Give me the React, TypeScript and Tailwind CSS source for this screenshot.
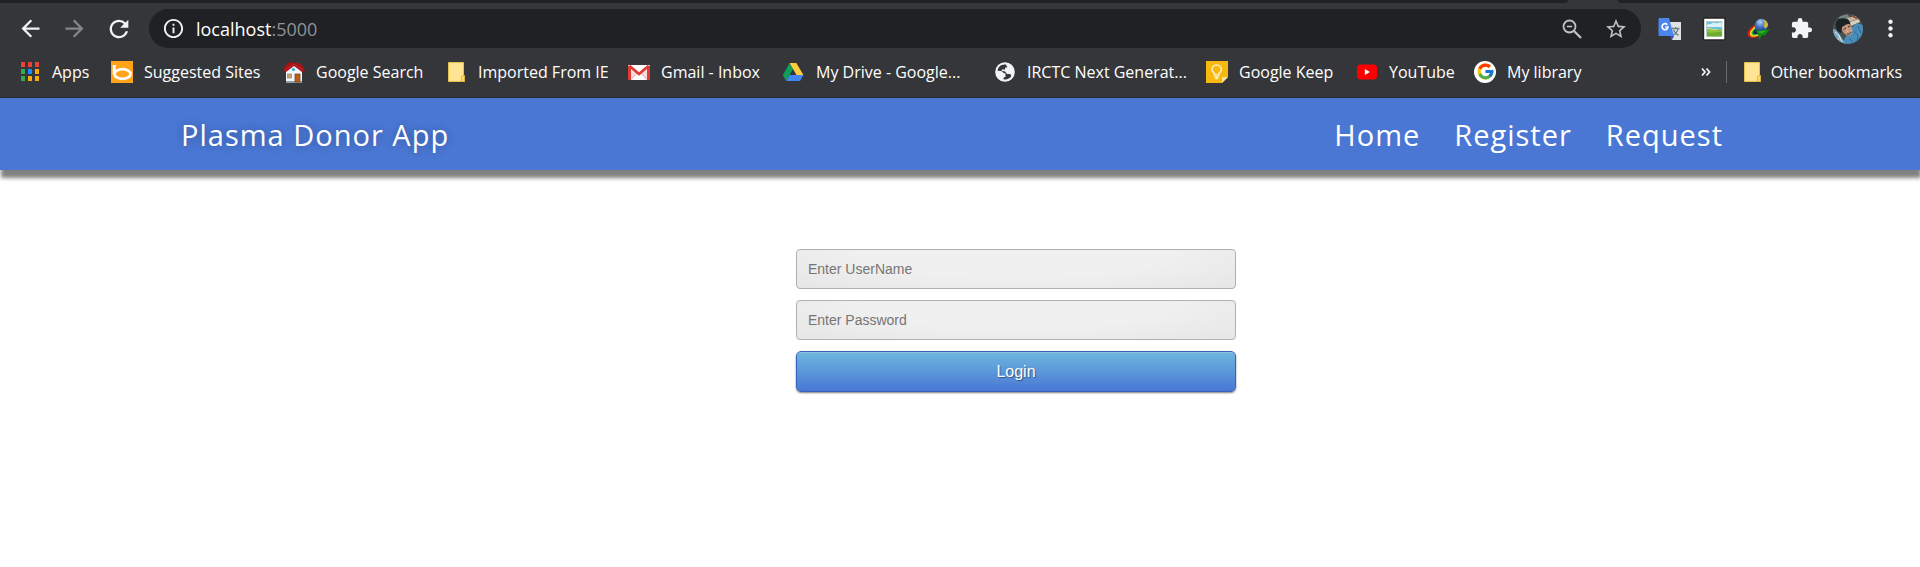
import React from "react";
import {
  MdArrowBack,
  MdArrowForward,
  MdExtension,
  MdInfoOutline,
  MdMoreVert,
  MdRefresh,
  MdStarBorder,
} from "react-icons/md";
import { FcGoogle } from "react-icons/fc";

const AppsIcon = () => {
  const colors = ["#ea4335", "#ea4335", "#ea4335", "#34a853", "#1a8cff", "#fbaa05", "#34a853", "#fbaa05", "#fbaa05"];
  return (
    <svg viewBox="0 0 22 22" className="size-[22px]">
      {colors.map((c, i) => (
        <rect key={i} x={2 + (i % 3) * 7} y={1 + Math.floor(i / 3) * 7} width="4" height="5" fill={c} />
      ))}
    </svg>
  );
};

const BingIcon = () => (
  <svg viewBox="0 0 22 22" className="size-[22px]">
    <rect width="22" height="22" fill="#ffa31a" />
    <path d="M3.2 4v9.5" stroke="#fff" strokeWidth="3" fill="none" />
    <ellipse cx="11.5" cy="13" rx="8" ry="4.8" stroke="#fff" strokeWidth="2.8" fill="none" />
  </svg>
);

const HouseIcon = () => (
  <svg viewBox="0 0 22 22" className="size-[22px]">
    <path d="M3 10 11 4l8 6v11H3z" fill="#f4f6fa" />
    <path d="M3 20h16v2H3z" fill="#8d9aa5" />
    <path d="M0 10 2 5l3-3h2V1h3v1h6l4 3 2 5-3 1-8-6-8 6z" fill="#a51319" />
    <path d="M2 9 11 3l9 6" stroke="#c42a2c" strokeWidth="1" fill="none" />
    <circle cx="10.5" cy="8.5" r="1.7" fill="#42b4e0" />
    <rect x="4.5" y="13" width="4" height="4" fill="#c9a56b" stroke="#7a8b99" strokeWidth=".7" />
    <rect x="12" y="13" width="5" height="8" fill="#b5611c" stroke="#7a3d10" strokeWidth=".7" />
  </svg>
);

const FolderIcon = () => (
  <svg viewBox="0 0 22 22" className="size-[22px]">
    <path d="M3.5 1.5h15v13h1v6h-16z" fill="#ffe593" stroke="#e8c24a" />
    <path d="M16.5 20.5v-5l1.5-1 1.5 1v5z" fill="#ffd86b" stroke="#dcae35" strokeWidth=".8" />
  </svg>
);

const GmailIcon = () => (
  <svg viewBox="0 0 22 22" className="size-[22px]">
    <rect y="4" width="22" height="15" fill="#f6dcda" />
    <path d="m3 19 6-7h4l6 7z" fill="#fff" />
    <path d="M3 18.5 9 12m10 6.5L13 12" stroke="#e9a7a3" />
    <path d="M3 4h16l-8 7z" fill="#fff" />
    <path d="M1.5 19V4.800" stroke="#dd3b35" strokeWidth="3" />
    <path d="M20.500 19V4.800" stroke="#dd3b35" strokeWidth="3" />
    <path d="m1.500 5 9.500 8 9.500-8" stroke="#dd3b35" strokeWidth="2.600" fill="none" />
  </svg>
);

const DriveIcon = () => (
  <svg viewBox="0 0 22 22" className="size-[22px]">
    <path d="M6.600 2 10 8 3.200 20-.2 14z" fill="#109d58" />
    <path d="M6.600 2h6.800l7 12h-6.900z" fill="#ffcd40" />
    <path d="M6.700 14h13.700L17 20H3.200z" fill="#4285f4" />
  </svg>
);

const GlobeIcon = () => (
  <svg viewBox="0 0 22 22" className="size-[22px]">
    <circle cx="11" cy="11" r="9.8" fill="#f1f3f4" />
    <path
      d="M12 3.6c-4.6-.8-8 2.2-8.4 6.2l3.6.2c1.600.1 1.700 2.300 3.300 2.300l1 .2v3.200l-2 1.100v1.400c3 .9 6.200-.5 7.900-3.100l-1.200-2.200h-3.200l-2.200-2.600-3-.4v-1.500h3.300V6.500h2.300z"
      fill="#35363a"
    />
  </svg>
);

const KeepIcon = () => (
  <svg viewBox="0 0 22 22" className="size-[22px]">
    <path d="M0 0h22v16l-6 6H0z" fill="#f7b90f" />
    <path d="M22 16h-6v6z" fill="#fde293" />
    <path
      d="M8.500 14v-1.500C6.800 11.500 6 10.200 6 8.600a4.700 4.700 0 0 1 9.400 0c0 1.600-.8 2.900-2.500 3.900V14z"
      fill="none"
      stroke="#fff1c4"
      strokeWidth="1.500"
    />
    <path d="M8.500 16h4.400M9.300 17.600h2.800" stroke="#fff1c4" strokeWidth="1.500" />
  </svg>
);

const YouTubeIcon = () => (
  <svg viewBox="0 0 22 22" className="size-[22px]">
    <rect x="1" y="3.500" width="20" height="15" rx="3.500" fill="#f00" />
    <path d="m8.800 8 5.200 3-5.200 3z" fill="#fff" />
  </svg>
);

const GoogleIcon = () => (
  <span className="flex size-[22px] items-center justify-center rounded-full bg-white">
    <FcGoogle size={19} />
  </span>
);

const ZoomOutIcon = () => (
  <svg viewBox="0 0 24 24" className="size-6" fill="none" stroke="currentColor">
    <circle cx="9.500" cy="9.500" r="6" strokeWidth="1.800" />
    <path d="M6.800 9.500h5.400" strokeWidth="1.600" />
    <path d="m14 14 7 7" strokeWidth="2.300" />
  </svg>
);

const TranslateIcon = () => (
  <svg viewBox="0 0 24 24" className="size-6">
    <path d="M10 5h13v18H14z" fill="#dfe1e4" />
    <path
      d="M14 11.500h7.500M17.700 10v1.500M20 11.800c-.7 3-2.600 5.200-5 6.500M15.500 13c1 2.400 2.800 4.200 5 5.300"
      stroke="#6b7d86"
      strokeWidth="1.300"
      fill="none"
    />
    <path d="M12 19h4l-2 4z" fill="#3a4fb5" />
    <path d="M1.500 1H11l5 18H1.500A1 1 0 0 1 .5 18V2a1 1 0 0 1 1-1z" fill="#4a86ee" />
    <path d="M9.300 7.700A3 3 0 1 0 10 10H7.300" stroke="#fff" strokeWidth="1.600" fill="none" />
  </svg>
);

const PictureIcon = () => (
  <svg viewBox="0 0 24 24" className="size-6">
    <rect x="1.500" y="1" width="21.500" height="22" rx="1" fill="#fff" stroke="#242424" strokeWidth="1.400" />
    <rect x="4.500" y="4.500" width="15.500" height="15" fill="#69c3dc" stroke="#b9bdb6" strokeWidth=".6" />
    <path d="M5 8c2-2 4 0 5-2 3-1 4 1 6 0 2-1 3 0 3.800-.5V10H5z" fill="#d9f1f6" />
    <path d="M5 12c5-1 10 2 14.800 0v7.300H5z" fill="#8fc43c" />
    <path d="M5 15c6 2 10-1 14.800 0v4.300H5z" fill="#6ead2f" />
    <path d="M5 11.500c4 0 7 1.500 10 1" stroke="#e8d68c" fill="none" />
  </svg>
);

const DownloadManagerIcon = () => (
  <svg viewBox="0 0 24 24" className="size-6">
    <defs>
      <radialGradient id="globe" cx=".4" cy=".25" r=".8">
        <stop offset="0" stopColor="#b9d3f2" />
        <stop offset=".45" stopColor="#3d74c4" />
        <stop offset="1" stopColor="#12306e" />
      </radialGradient>
    </defs>
    <ellipse cx="11" cy="13.500" rx="10.500" ry="6.200" transform="rotate(-32 11 13.500)" fill="#c81f1a" />
    <ellipse cx="11.700" cy="13.500" rx="9" ry="4.900" transform="rotate(-32 11.700 13.500)" fill="#f7d417" />
    <ellipse cx="12.300" cy="13.300" rx="7.600" ry="3.700" transform="rotate(-32 12.300 13.300)" fill="#2fae3d" />
    <ellipse cx="12.800" cy="13" rx="6.400" ry="2.700" transform="rotate(-32 12.800 13)" fill="#16244f" />
    <circle cx="15.500" cy="8.500" r="6.800" fill="url(#globe)" />
    <path d="M17 2.500c3 .5 5 3 5.200 6L19.500 12l-2-3 1-3z" fill="#c9b746" />
    <path d="m9 13 4 .8L24 12l-4.500 6-4 .5-2 4.500-1.500-6z" fill="#12860f" />
    <path d="m12 14.200 9-.7-4 2.500-3.500.6z" fill="#27b324" />
  </svg>
);

const Avatar = () => (
  <svg viewBox="0 0 30 30" className="size-[30px]">
    <defs>
      <clipPath id="avatar">
        <circle cx="15" cy="15" r="15" />
      </clipPath>
    </defs>
    <g clipPath="url(#avatar)">
      <rect width="30" height="30" fill="#46524f" />
      <path d="M5 3 14 0l3 4-9 3z" fill="#71837d" />
      <path d="m14 4 9-2 2 3-9 3z" fill="#c9b398" />
      <path d="m17 8 9-3 1 3-9 4z" fill="#d8d0bd" />
      <path d="m20 1 5 3-2 1-5-3z" fill="#874f3c" />
      <path d="M18 14 24 9l6 2v19H10l2-6z" fill="#4a8dbb" />
      <path d="m21 17 4 5-1 6M25 12l3 7M16 24l4 4" stroke="#2f668f" fill="none" />
      <path d="M0 15c4 0 6 5 8 8l5 7H0z" fill="#7ba9bf" />
      <path d="m2 18 5 4-2 4M6 21l3 7" stroke="#d6e6e8" fill="none" />
      <ellipse cx="14" cy="15" rx="5" ry="7" transform="rotate(-28 14 15)" fill="#c4967a" />
      <path d="M3 14C1 6 7 3 12 4.500c4 .5 5 3 5 5.500-4-.5-6 2-8 3l-1 6c-3-1-4.500-3-5-5z" fill="#1b2325" />
      <path d="m10.500 15.500 2.500-1.500M15 13l2-1M14 20c2 .5 3.500-.5 4-2" stroke="#3e2a24" fill="none" />
      <path d="m13 15 2 3" stroke="#e4bda3" />
    </g>
  </svg>
);

type Bookmark = { label: string; icon: React.ReactNode; width: string };

const bookmarks: Bookmark[] = [
  { label: "Apps", icon: <AppsIcon />, width: "w-[92px]" },
  { label: "Suggested Sites", icon: <BingIcon />, width: "w-[172px]" },
  { label: "Google Search", icon: <HouseIcon />, width: "w-[162px]" },
  { label: "Imported From IE", icon: <FolderIcon />, width: "w-[183px]" },
  { label: "Gmail - Inbox", icon: <GmailIcon />, width: "w-[155px]" },
  { label: "My Drive - Google...", icon: <DriveIcon />, width: "w-[211px]" },
  { label: "IRCTC Next Generat...", icon: <GlobeIcon />, width: "w-[212px]" },
  { label: "Google Keep", icon: <KeepIcon />, width: "w-[150px]" },
  { label: "YouTube", icon: <YouTubeIcon />, width: "w-[118px]" },
  { label: "My library", icon: <GoogleIcon />, width: "w-[110px]" },
];

const TabStrip = () => (
  <div className="flex h-[3px] bg-[#35363a]">
    <div className="flex-1 rounded-br-[6px] bg-[#202124]" />
    <div className="w-[50px]" />
    <div className="w-[302px] rounded-bl-[6px] bg-[#202124]" />
  </div>
);

const Toolbar = () => (
  <div className="flex h-[51px] items-center pr-4 pl-[17px] text-[#f1f3f4]">
    <button aria-label="Back" className="mr-[17px]">
      <MdArrowBack size={27} />
    </button>
    <button aria-label="Forward" className="mr-[17px] text-[#85868a]">
      <MdArrowForward size={27} />
    </button>
    <button aria-label="Reload" className="mr-4">
      <MdRefresh size={28} />
    </button>
    <div className="flex h-[39px] min-w-0 flex-1 items-center rounded-full bg-[#202124] px-[13px]">
      <button aria-label="Site information" className="mr-[11px]">
        <MdInfoOutline size={23} />
      </button>
      <div className="min-w-0 flex-1 text-[18px] leading-6 text-white">
        localhost<span className="text-[#8f9296]">:5000</span>
      </div>
      <button aria-label="Zoom" className="mr-5 text-[#bdc1c6]">
        <ZoomOutIcon />
      </button>
      <button aria-label="Bookmark this page" className="text-[#bdc1c6]">
        <MdStarBorder size={24} />
      </button>
    </div>
    <div className="ml-[17px] flex items-center gap-5">
      <button aria-label="Translate">
        <TranslateIcon />
      </button>
      <button aria-label="Pictures">
        <PictureIcon />
      </button>
      <button aria-label="Download manager">
        <DownloadManagerIcon />
      </button>
      <button aria-label="Extensions">
        <MdExtension size={23} />
      </button>
      <button aria-label="Profile">
        <Avatar />
      </button>
    </div>
    <button aria-label="Menu" className="ml-3.5">
      <MdMoreVert size={27} />
    </button>
  </div>
);

const BookmarksBar = () => (
  <div className="flex h-11 items-center border-b border-[#28292c] pr-[18px] pb-2 pl-[19px] text-[16px] leading-[22px] whitespace-nowrap text-white">
    <nav aria-label="Bookmarks" className="flex min-w-0 flex-1">
      {bookmarks.map((b) => (
        <a key={b.label} href="#" className={`flex shrink-0 items-center gap-[11px] ${b.width}`}>
          {b.icon}
          {b.label}
        </a>
      ))}
    </nav>
    <button aria-label="More bookmarks" className="mr-[15px]">
      <svg viewBox="0 0 10 10" className="size-2.5">
        <path d="m1 1.500 3 3.500-3 3.500M5.500 1.500l3 3.500-3 3.500" fill="none" stroke="#f1f3f4" strokeWidth="1.800" />
      </svg>
    </button>
    <div className="mr-3.5 h-[22px] w-px bg-[#6a6b6f]" />
    <a href="#" className="flex items-center gap-2">
      <FolderIcon />
      Other bookmarks
    </a>
  </div>
);

const SiteHeader = () => (
  <header className="flex h-[72px] items-center justify-between bg-[#4a77d4] px-[181px] pt-0.5 font-['Open_Sans','Noto_Sans',sans-serif] text-[29px] leading-10 tracking-[1px] text-white shadow-[1px_8px_4px_#808080]">
    <a href="#" className="[text-shadow:0_0_10px_rgba(0,0,0,0.3)]">
      Plasma Donor App
    </a>
    <nav className="flex gap-[34px] pr-4">
      <a href="#">Home</a>
      <a href="#">Register</a>
      <a href="#">Request</a>
    </nav>
  </header>
);

const field =
  "h-10 rounded-[4px] border border-[#b0b0b0] bg-[radial-gradient(ellipse_at_50%_0%,#f0f0f0_50%,#e6e6e6_100%)] px-[11px] text-[14px] text-[#333] outline-none placeholder:text-[#757575]";

const LoginForm = () => (
  <form
    onSubmit={(e) => e.preventDefault()}
    className="mx-auto flex w-full max-w-[440px] flex-col gap-[11px] font-['Liberation_Sans',Arial,sans-serif]"
  >
    <input aria-label="Enter UserName" type="text" placeholder="Enter UserName" className={field} />
    <input aria-label="Enter Password" type="password" placeholder="Enter Password" className={field} />
    <button
      type="submit"
      className="h-[41px] rounded-[5px] border border-[#3762bc] bg-linear-to-b from-[#6eb6de] to-[#4a77d4] text-[16px] text-white shadow-[inset_0_1px_0_rgba(255,255,255,0.2),0_1px_2px_rgba(0,0,0,0.5)] [text-shadow:1px_1px_1px_rgba(0,0,0,0.4)]"
    >
      Login
    </button>
  </form>
);

export default function App() {
  return (
    <div className="min-h-screen bg-white">
      <div className="bg-[#35363a] font-['Open_Sans','Noto_Sans',sans-serif]">
        <TabStrip />
        <Toolbar />
        <BookmarksBar />
      </div>
      <SiteHeader />
      <main className="pt-[79px] pb-10 pl-28">
        <LoginForm />
      </main>
    </div>
  );
}
